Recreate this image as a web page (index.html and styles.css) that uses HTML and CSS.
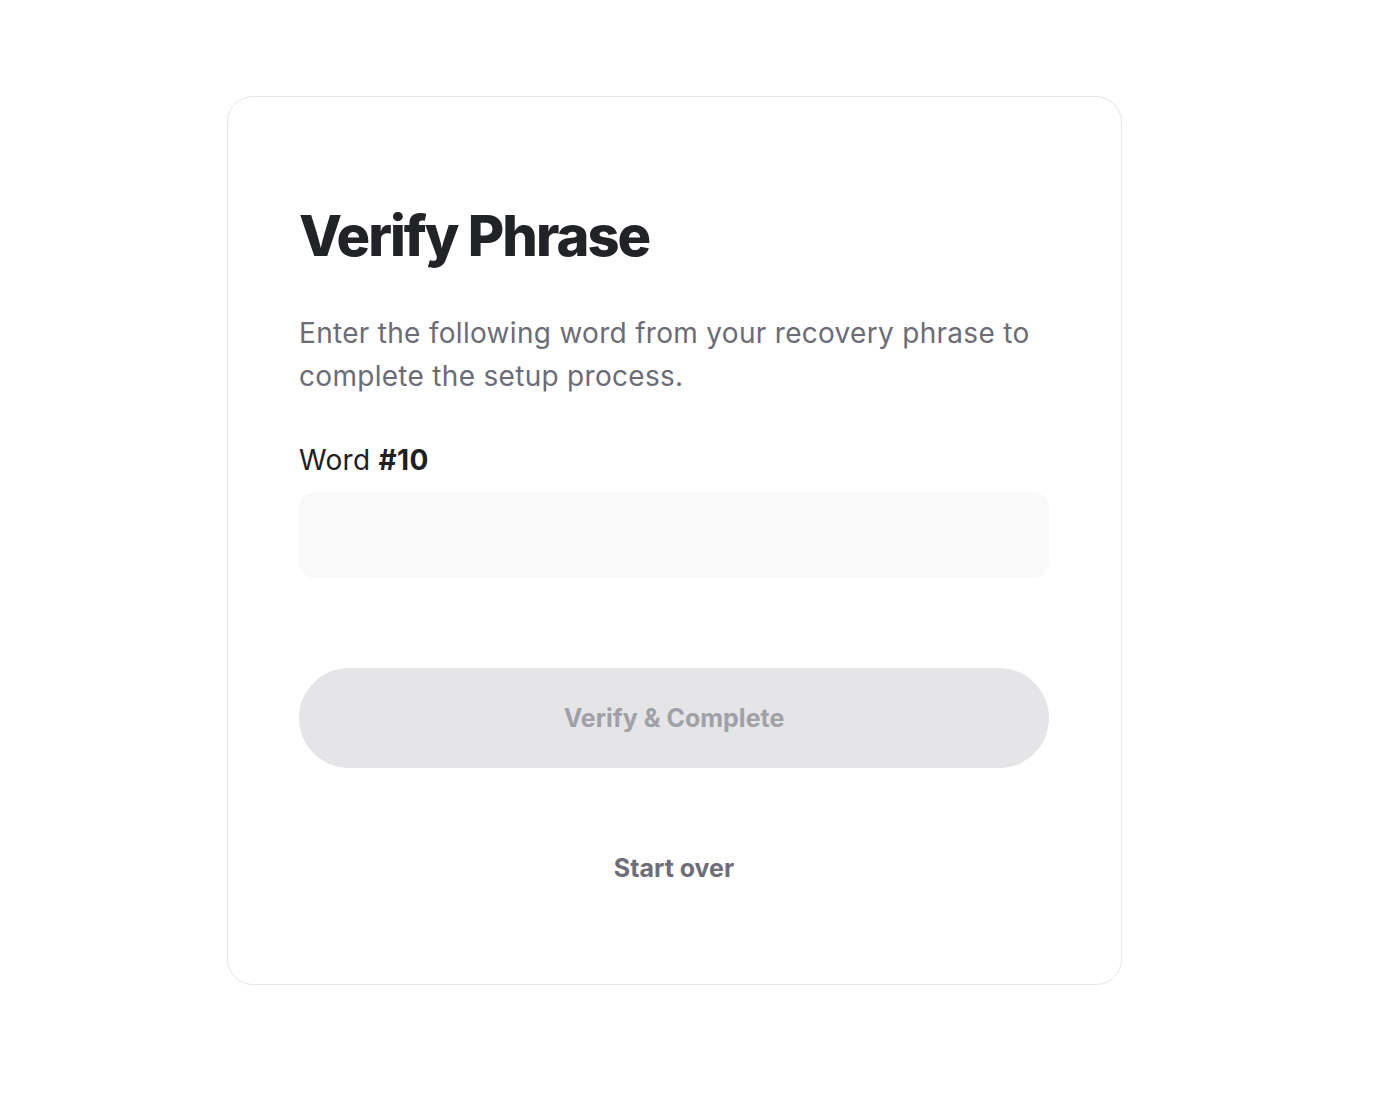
FILE: index.html
```html
<!DOCTYPE html>
<html lang="en">
<head>
<meta charset="utf-8">
<title>Verify Phrase</title>
<link rel="stylesheet" href="styles.css">
</head>
<body>
<main class="page">
  <section class="card">
    <h1 class="title">Verify Phrase</h1>
    <p class="desc">Enter the following word from your recovery phrase to complete the setup process.</p>
    <label class="label" for="word">Word <strong>#10</strong></label>
    <input class="input" id="word" type="text" autocomplete="off">
    <button class="btn-primary" type="button" disabled>Verify &amp; Complete</button>
    <button class="btn-link" type="button">Start over</button>
  </section>
</main>
</body>
</html>
```

FILE: styles.css
```css
* { box-sizing: border-box; }
html, body { margin: 0; padding: 0; background: #ffffff; }
body { font-family: Inter, "Noto Sans", sans-serif; color: #1f2024; }
.page {
  padding: 96px 0 0 227px;
  display: flex;
}
.card {
  width: 895px;
  height: 889px;
  border: 1px solid #e6e6e8;
  border-radius: 26px;
  padding: 104px 72px 0 71px;
  display: flex;
  flex-direction: column;
}
.title {
  margin: 0;
  font-size: 56px;
  line-height: 70px;
  font-weight: 800;
  letter-spacing: -0.035em;
  color: #222326;
}
.desc {
  margin: 41px 0 0 0;
  font-size: 28px;
  line-height: 43px;
  letter-spacing: 0.3px;
  color: #6c6c76;
  font-weight: 400;
}
.label {
  margin-top: 42px;
  font-size: 28px;
  line-height: 40px;
  letter-spacing: 0.3px;
  color: #1f2024;
}
.label strong { font-weight: 700; }
.input {
  margin-top: 12px;
  height: 86px;
  width: 100%;
  border: none;
  border-radius: 16px;
  background: #f9f9f9;
  font: inherit;
  font-size: 28px;
  padding: 0 24px;
  outline: none;
}
.btn-primary {
  margin-top: 90px;
  height: 100px;
  width: 100%;
  border: none;
  border-radius: 50px;
  background: #e5e5e7;
  color: #a0a0a8;
  font-family: inherit;
  font-size: 25px;
  font-weight: 700;
  cursor: not-allowed;
}
.btn-link {
  margin-top: 80px;
  align-self: center;
  border: none;
  background: none;
  color: #6e6e78;
  font-family: inherit;
  font-size: 25px;
  font-weight: 700;
  line-height: 40px;
  padding: 0;
  cursor: pointer;
}
```
